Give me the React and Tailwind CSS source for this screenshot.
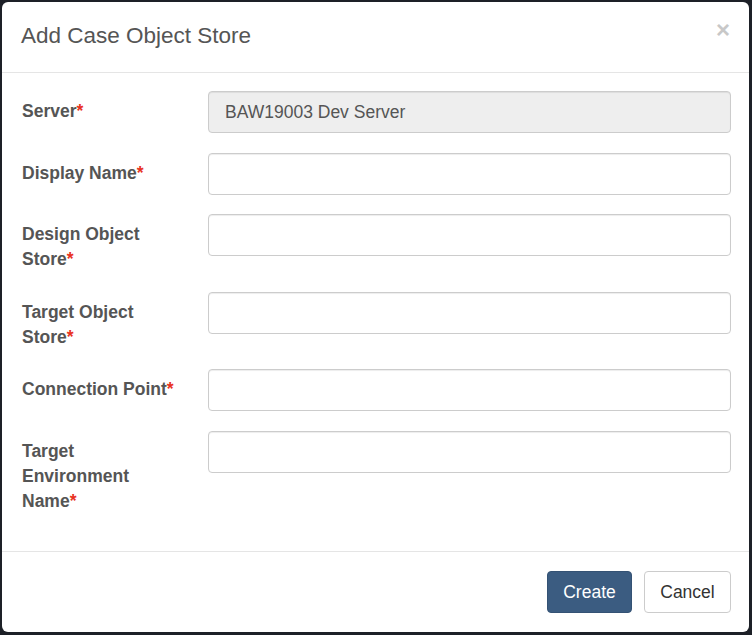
import React from 'react';

const fields = [
    { label: ['Server'], value: 'BAW19003 Dev Server', disabled: true },
    { label: ['Display Name'] },
    { label: ['Design Object', 'Store'] },
    { label: ['Target Object', 'Store'] },
    { label: ['Connection Point'] },
    { label: ['Target', 'Environment', 'Name'] },
];

function FieldLabel({ lines }) {
    return (
        <label className="block pt-[8px] text-[17.5px] leading-[25px] font-bold text-[#555]">
            {lines.map((line, i) => (
                <span key={i} className="block">
                    {line}
                    {i === lines.length - 1 && <span className="text-[#e8331f]">*</span>}
                </span>
            ))}
        </label>
    );
}

export default function App() {
    return (
        <div className="min-h-[635px] bg-[#1d2027] pt-[2px] pl-[2px]" style={{ fontFamily: '"Liberation Sans", Arial, sans-serif' }}>
            <div className="w-[747px] h-[630px] bg-white rounded-[6px] flex flex-col">
                <div className="flex items-center justify-between h-[71px] px-5 border-b border-[#e5e5e5]">
                    <h4 className="text-[22.5px] text-[#555] font-normal -mt-[3px] -ml-[1px]">Add Case Object Store</h4>
                    <span className="text-[24px] font-bold text-[#c8c8c8] leading-none -mt-[14px] mr-[-1px]">×</span>
                </div>
                <div className="px-5 pt-[18px] flex-1">
                    {fields.map((f, i) => (
                        <div key={i} className="grid grid-cols-[186px_1fr] mb-[19.5px]">
                            <FieldLabel lines={f.label} />
                            <input
                                type="text"
                                disabled={f.disabled}
                                defaultValue={f.value || ''}
                                className={`h-[42px] w-[523px] rounded-[4px] border border-[#ccc] px-4 text-[17.5px] text-[#555] shadow-[inset_0_1px_1px_rgba(0,0,0,0.075)] ${f.disabled ? 'bg-[#eee]' : 'bg-white'}`}
                            />
                        </div>
                    ))}
                </div>
                <div className="border-t border-[#e5e5e5] pl-5 pr-[18px] pt-[19px] pb-[19px] flex justify-end gap-3">
                    <button className="h-[42px] w-[85px] rounded-[4px] bg-[#3b5c81] border border-[#345274] text-white text-[17.5px]">
                        Create
                    </button>
                    <button className="h-[42px] w-[87px] rounded-[4px] bg-white border border-[#ccc] text-[#333] text-[17.5px]">
                        Cancel
                    </button>
                </div>
            </div>
        </div>
    );
}
